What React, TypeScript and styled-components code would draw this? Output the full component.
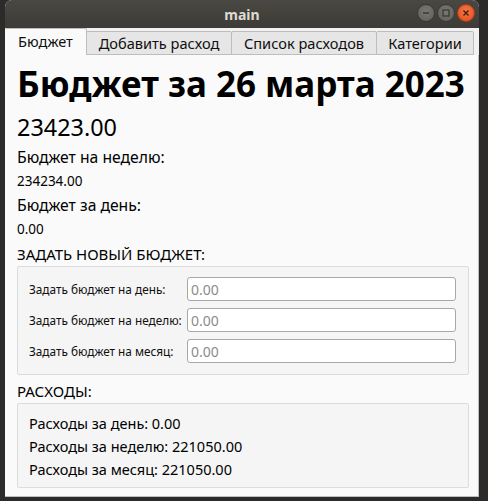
import React from "react";
import styled, { createGlobalStyle } from "styled-components";

const Global = createGlobalStyle`
  html, body { margin: 0; padding: 0; background: #2b2a29; }
  body { font-family: "Noto Sans", "DejaVu Sans", sans-serif; }
  * { box-sizing: border-box; }
`;

const Desktop = styled.div`
  width: 488px;
  height: 501px;
  background: #2c2b2a;
  padding: 0 9px 4px 5px;
  overflow: hidden;
`;

const Window = styled.div`
  width: 474px;
  height: 497px;
  display: flex;
  flex-direction: column;
  background: #f2f1f0;
  border-radius: 7px 7px 0 0;
  overflow: hidden;
`;

const TitleBar = styled.div`
  height: 28px;
  flex: none;
  position: relative;
  display: flex;
  align-items: center;
  justify-content: center;
  background: linear-gradient(#4a4843, #3c3b37);
  color: #dfdbd2;
  font-weight: bold;
  font-size: 14px;
`;

const WinButtons = styled.div`
  position: absolute;
  right: 4px;
  top: 4px;
  display: flex;
  gap: 2px;
`;

const WinBtn = styled.div<{ $close?: boolean }>`
  width: 18px;
  height: 18px;
  border-radius: 50%;
  display: flex;
  align-items: center;
  justify-content: center;
  background: ${(p) => (p.$close ? "radial-gradient(circle at 50% 40%, #f37a4d, #df4a16)" : "radial-gradient(circle at 50% 40%, #7a7873, #5f5d58)")};
  border: 1px solid ${(p) => (p.$close ? "#b03a10" : "#3a3935")};
`;

const TabBar = styled.div`
  height: 27px;
  flex: none;
  display: flex;
  align-items: flex-end;
  background: #f2f1f0;
`;

const Tab = styled.div<{ $active?: boolean; $w: number }>`
  width: ${(p) => p.$w}px;
  height: ${(p) => (p.$active ? 27 : 24)}px;
  display: flex;
  align-items: center;
  justify-content: center;
  font-size: 14.6px;
  color: #101010;
  background: ${(p) => (p.$active ? "#fafafa" : "#e6e6e6")};
  border: 1px solid #bdbdbd;
  border-bottom: ${(p) => (p.$active ? "none" : "1px solid #bdbdbd")};
  border-left: ${(p) => (p.$active ? "none" : "1px solid #bdbdbd")};
  border-radius: 2px 2px 0 0;
  margin-left: ${(p) => (p.$active ? 0 : -1)}px;
  padding-bottom: ${(p) => (p.$active ? 2 : 0)}px;
`;

const Pane = styled.div`
  flex: 1;
  background: #fafafa;
  border-right: 1px solid #bdbdbd;
  border-bottom: 1px solid #bdbdbd;
  padding: 9px 9px 0 12px;
  color: #000;
  display: flex;
  flex-direction: column;
`;

const Heading = styled.div`
  font-size: 35px;
  font-weight: bold;
  line-height: 40px;
  white-space: nowrap;
`;

const Big = styled.div`
  font-size: 23.4px;
  line-height: 30px;
  margin-top: 8px;
`;

const Label = styled.div`
  font-size: 15.7px;
  line-height: 24px;
  margin-top: ${(p: { $mt?: number }) => p.$mt ?? 1}px;
`;

const Value = styled.div`
  font-size: 13.5px;
  line-height: 22px;
  margin-top: 1px;
`;

const Section = styled.div<{ $mt: number }>`
  font-size: 15px;
  line-height: 18px;
  margin-top: ${(p) => p.$mt}px;
`;

const Group = styled.div`
  margin-top: 3px;
  border: 1px solid #dcdcdc;
  border-radius: 2px;
  background: #f5f5f5;
`;

const FormGroup = styled(Group)`
  padding: 10px 12px 11px 11px;
  display: grid;
  grid-template-columns: 158px 1fr;
  row-gap: 7px;
  align-items: center;
`;

const FieldLabel = styled.div`
  font-size: 11.8px;
  color: #101010;
`;

const Input = styled.input`
  height: 24px;
  width: 100%;
  border: 1px solid #a8a8a8;
  border-radius: 3px;
  background: #fff;
  font-family: inherit;
  font-size: 14px;
  padding: 0 3px;
  &::placeholder { color: #8c8c8c; }
`;

const ListGroup = styled(Group)`
  padding: 8px 12px 6px 11px;
  display: flex;
  flex-direction: column;
`;

const Row = styled.div`
  font-size: 14.5px;
  line-height: 23px;
`;

export default function App() {
  return (
    <>
      <Global />
      <Desktop>
        <Window>
          <TitleBar>
            main
            <WinButtons>
              <WinBtn>
                <svg width="10" height="10" viewBox="0 0 10 10"><path d="M2 5h6" stroke="#3a3935" strokeWidth="1.6" /></svg>
              </WinBtn>
              <WinBtn>
                <svg width="10" height="10" viewBox="0 0 10 10"><rect x="2" y="2" width="6" height="6" fill="none" stroke="#3a3935" strokeWidth="1.3" /></svg>
              </WinBtn>
              <WinBtn $close>
                <svg width="10" height="10" viewBox="0 0 10 10"><path d="M2.5 2.5l5 5M7.5 2.5l-5 5" stroke="#4a1a08" strokeWidth="1.4" /></svg>
              </WinBtn>
            </WinButtons>
          </TitleBar>
          <TabBar>
            <Tab $active $w={82}>Бюджет</Tab>
            <Tab $w={146}>Добавить расход</Tab>
            <Tab $w={146}>Список расходов</Tab>
            <Tab $w={98}>Категории</Tab>
          </TabBar>
          <Pane>
            <Heading>Бюджет за 26 марта 2023</Heading>
            <Big>23423.00</Big>
            <Label $mt={3}>Бюджет на неделю:</Label>
            <Value>234234.00</Value>
            <Label>Бюджет за день:</Label>
            <Value>0.00</Value>
            <Section $mt={5}>ЗАДАТЬ НОВЫЙ БЮДЖЕТ:</Section>
            <FormGroup>
              <FieldLabel>Задать бюджет на день:</FieldLabel>
              <Input placeholder="0.00" />
              <FieldLabel>Задать бюджет на неделю:</FieldLabel>
              <Input placeholder="0.00" />
              <FieldLabel>Задать бюджет на месяц:</FieldLabel>
              <Input placeholder="0.00" />
            </FormGroup>
            <Section $mt={7}>РАСХОДЫ:</Section>
            <ListGroup>
              <Row>Расходы за день: 0.00</Row>
              <Row>Расходы за неделю: 221050.00</Row>
              <Row>Расходы за месяц: 221050.00</Row>
            </ListGroup>
          </Pane>
        </Window>
      </Desktop>
    </>
  );
}
